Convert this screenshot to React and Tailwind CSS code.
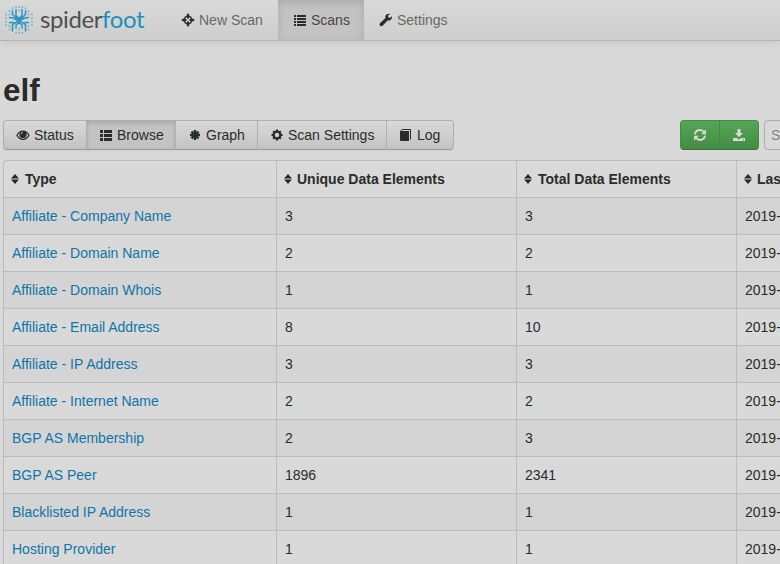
const rows = [
  ['Affiliate - Company Name', '3', '3'],
  ['Affiliate - Domain Name', '2', '2'],
  ['Affiliate - Domain Whois', '1', '1'],
  ['Affiliate - Email Address', '8', '10'],
  ['Affiliate - IP Address', '3', '3'],
  ['Affiliate - Internet Name', '2', '2'],
  ['BGP AS Membership', '2', '3'],
  ['BGP AS Peer', '1896', '2341'],
  ['Blacklisted IP Address', '1', '1'],
  ['Hosting Provider', '1', '1'],
];

const Icon = ({ children, className = 'text-[#2b2b2b]' }) => (
  <svg width="14" height="14" viewBox="0 0 14 14" fill="currentColor" className={`shrink-0 ${className}`}>
    {children}
  </svg>
);

const Crosshair = () => (
  <Icon>
    <circle cx="7" cy="7" r="3.700" fill="none" stroke="currentColor" strokeWidth="1.600" />
    <path d="M6 1h2v4.500H6zM6 8.500h2V13H6zM1 6h4.500v2H1zM8.500 6H13v2H8.500z" />
    <path d="M7 .3l1.800 2H5.200zM7 13.700l1.800-2H5.200zM.3 7l2-1.800v3.600zM13.700 7l-2-1.800v3.600z" />
  </Icon>
);
const List = () => (
  <Icon>
    <path d="M1 2h2v2H1zM4 2h9v2H4zM1 5h2v2H1zM4 5h9v2H4zM1 8h2v2H1zM4 8h9v2H4zM1 11h2v2H1zM4 11h9v2H4z" />
  </Icon>
);
const ThList = () => (
  <Icon>
    <path d="M1 2h3v3H1zM5 2h8v3H5zM1 6h3v3H1zM5 6h8v3H5zM1 10h3v3H1zM5 10h8v3H5z" />
  </Icon>
);
const Wrench = () => (
  <Icon>
    <path d="M12.900 3.300l-2.100 1.600-1.700-.8.100-1.900L11.300.9C9.300.4 7.400 1.100 6.600 2.600c-.4.900-.4 1.700-.1 2.500L1.200 9.900c-.9 1-.8 2.200-.1 2.900.8.700 2 .6 2.700-.3L8.600 7.500c1.400.3 2.900-.1 3.800-1.400.6-.9.800-1.800.5-2.800z" />
  </Icon>
);
const Eye = () => (
  <Icon>
    <path fillRule="evenodd" d="M.3 7.300C1.800 4.300 4.200 2.600 7 2.600s5.200 1.700 6.700 4.700C12.200 10.200 9.800 12 7 12S1.800 10.200.3 7.300zM1.700 7.300C3 9.600 4.900 10.800 7 10.800s4-1.200 5.300-3.500C11.800 6.200 11 5.300 10.100 4.700 11.600 7 10 10.100 7 10.100S2.400 7 3.900 4.700C3 5.300 2.200 6.200 1.700 7.300zM5.200 6.200c.2-.9.900-1.500 1.900-1.500V4C5.700 4 4.700 4.900 4.500 6.200z" />
  </Icon>
);
const Asterisk = () => (
  <Icon>
    <path d="M7 2v10M2 7h10M3.500 3.500l7 7M10.500 3.500l-7 7" stroke="currentColor" strokeWidth="2.400" />
  </Icon>
);
const Cog = () => (
  <Icon>
    <circle cx="7" cy="7" r="3.400" fill="none" stroke="currentColor" strokeWidth="2.300" />
    <path d="M6 1.500h2v2H6zM6 10.500h2v2H6zM1.500 6h2v2h-2zM10.500 6h2v2h-2zM2.500 3.900l1.400-1.400 1.300 1.300-1.400 1.400zM8.800 3.800l1.300-1.300 1.400 1.400-1.300 1.300zM2.500 10.100l1.300-1.300 1.400 1.400-1.300 1.300zM8.800 10.200l1.400-1.400 1.300 1.300-1.400 1.400z" />
  </Icon>
);
const Book = () => (
  <Icon>
    <path d="M1 3h9v10H2a1 1 0 0 1-1-1z" />
    <path d="M1.500 3.500L3 1.500h8.500v10" fill="none" stroke="currentColor" />
  </Icon>
);
const Refresh = () => (
  <Icon className="text-[#d9d9d9]">
    <path d="M2 6.300C2.400 3.700 4.500 2 7 2c1.500 0 2.800.7 3.700 1.800M12 7.700C11.600 10.300 9.500 12 7 12c-1.500 0-2.800-.7-3.700-1.800" fill="none" stroke="currentColor" strokeWidth="1.900" />
    <path d="M13 1.300v4.900H8.200zM1 12.700V7.800h4.800z" />
  </Icon>
);
const Download = () => (
  <Icon className="text-[#d9d9d9]">
    <path d="M5.500 1h3v4H11L7 9.300 3 5h2.500z" />
    <path fillRule="evenodd" d="M1 10h4l2 1.500L9 10h4v3H1zM11 11v1h1v-1z" />
  </Icon>
);
const Sort = () => (
  <svg width="8" height="10" viewBox="0 0 8 10" className="shrink-0" fill="#252a2b">
    <path d="M4 0L8 4.500H0zM4 10L0 5.500h8z" />
  </svg>
);

const LogoMark = () => (
  <svg width="28" height="28" viewBox="0 0 28 28" fill="none" className="shrink-0">
    <g stroke="#2b96c3" strokeWidth="1.500" strokeLinecap="round" strokeLinejoin="round">
      <path d="M11 3.500V9.500l3 3.500 3-3.500V3.500M7.500 5v3.500l6.500 6 6.500-6V5M4.500 11.500l4 .5 5.500 3 5.500-3 4-.5M7.500 25v-6.500L14 14.500l6.500 4V25M11 22v-3l3-2.500 3 2.500v3M4.500 16.500H8M20 16.500h3.500" />
      <path d="M14 12v5" strokeWidth="2.500" />
    </g>
    <g fill="#8abdd1">
      <path d="M10 0h2v2h-2zM13 0h2v2h-2zM16 0h2v2h-2zM6.500 1.500h2v2h-2zM19.500 1.500h2v2h-2zM13 3.500h2v2h-2zM3.500 4h2v2h-2zM22.500 4h2v2h-2zM3.500 7.500h2v2h-2zM22.500 7.500h2v2h-2zM0 7.500h2v2H0zM26 7.500h2v2h-2zM0 11h2v2H0zM26 11h2v2h-2zM0 14.500h2v2H0zM26 14.500h2v2h-2zM0 18h2v2H0zM26 18h2v2h-2zM3.500 19h2v2h-2zM22.500 19h2v2h-2zM3.500 22.500h2v2h-2zM22.500 22.500h2v2h-2zM13 22.500h2v2h-2zM10 26h2v2h-2zM13 26h2v2h-2zM16 26h2v2h-2z" />
    </g>
  </svg>
);

const navItems = [
  [Crosshair, 'New Scan', 'w-[112px] text-[#686868]'],
  [List, 'Scans', 'w-[86px] bg-[#c3c3c3] text-[#474747] shadow-[inset_0_3px_8px_rgba(0,0,0,0.125)]'],
  [Wrench, 'Settings', 'text-[#686868]'],
];

const tabs = [
  [Eye, 'Status', 'w-[83px] rounded-l-[4px] border-l'],
  [ThList, 'Browse', 'w-[89px] border-l'],
  [Asterisk, 'Graph', 'w-[82px] border-l'],
  [Cog, 'Scan Settings', 'w-[129px] border-l'],
  [Book, 'Log', 'w-[68px] rounded-r-[4px] border-x'],
];

const headers = [
  ['Type', 'gap-[6px]'],
  ['Unique Data Elements', 'gap-[5px]'],
  ['Total Data Elements', 'gap-[6px]'],
  ['Last Data Element', 'gap-[5px]'],
];

const columns = 'grid grid-cols-[273px_240px_220px_200px]';

export default function App() {
  return (
    <div className="h-[564px] w-[780px] overflow-hidden bg-[#d9d9d9] font-['Liberation_Sans',Arial,sans-serif] text-[14px] leading-5 text-[#2b2b2b]">
      <header className="flex h-[41px] border-b border-[#b4b4b4] bg-linear-to-b from-[#d9d9d9] to-[#cecece] shadow-[0_1px_10px_rgba(0,0,0,0.1)]">
        <div className="flex w-[166px] items-start pl-[5px] pt-[6px]">
          <LogoMark />
          <div className="ml-[7px] mt-[-1px] font-[family-name:Lato] text-[24px] leading-7 tracking-[-0.4px] text-[#505050]">
            spider<span className="text-[#1d8fbd]">foot</span>
          </div>
        </div>
        <nav className="flex">
          {navItems.map(([Glyph, label, cls]) => (
            <a key={label} className={`flex h-10 items-center gap-1 whitespace-nowrap pl-[15px] ${cls}`}>
              <Glyph />
              {label}
            </a>
          ))}
        </nav>
      </header>

      <h1 className="ml-[3px] mt-[29px] text-[31.500px] font-bold leading-10">elf</h1>

      <div className="ml-[3px] mt-[10px] flex h-[30px]">
        <div className="flex rounded-[4px] shadow-[0_1px_2px_rgba(0,0,0,0.05)]">
          {tabs.map(([Glyph, label, cls]) => (
            <button
              key={label}
              className={`flex h-[30px] items-center gap-1 whitespace-nowrap border-y border-[#b0b0b0] border-b-[#989898] pl-3 ${cls} ${
                label === 'Browse'
                  ? 'bg-[#c3c3c3] shadow-[inset_0_2px_4px_rgba(0,0,0,0.15)]'
                  : 'bg-linear-to-b from-[#d9d9d9] to-[#c3c3c3] shadow-[inset_0_1px_0_rgba(255,255,255,0.1)]'
              }`}
            >
              <Glyph />
              {label}
            </button>
          ))}
        </div>
        <div className="ml-[226px] flex h-[30px] w-[79px] shrink-0 overflow-hidden rounded-[4px] border border-[#458b45] border-b-[#397239] bg-linear-to-b from-[#53a753] to-[#458b45]">
          <button className="flex w-[39px] items-center justify-center border-r border-[#458945]"><Refresh /></button>
          <button className="flex w-[38px] items-center justify-center"><Download /></button>
        </div>
        <div className="ml-[5px] flex h-[30px] w-[120px] shrink-0 items-center rounded-[4px] border border-[#adadad] pl-[6px] text-[#828282]">
          Search...
        </div>
      </div>

      <div className="ml-[3px] mt-[10px] w-[933px] rounded-tl-[4px] border-l border-t border-[#bcbcbc]">
        <div className={columns}>
          {headers.map(([label, gap], i) => (
            <div key={label} className={`flex h-9 items-center whitespace-nowrap pl-[7px] font-bold ${gap} ${i ? 'border-l border-[#bcbcbc] -ml-px' : ''}`}>
              <Sort />
              {label}
            </div>
          ))}
        </div>
        {rows.map(([type, unique, total], i) => (
          <div key={type} className={`${columns} h-[37px] border-t border-[#bcbcbc] ${i % 2 ? '' : 'bg-[#d4d4d4]'}`}>
            <a className="flex items-center pl-2 text-[#0f75a9]">{type}</a>
            <div className="-ml-px flex items-center border-l border-[#bcbcbc] pl-2">{unique}</div>
            <div className="-ml-px flex items-center border-l border-[#bcbcbc] pl-2">{total}</div>
            <div className="-ml-px flex items-center border-l border-[#bcbcbc] pl-2">2019-03-12</div>
          </div>
        ))}
      </div>
    </div>
  );
}
